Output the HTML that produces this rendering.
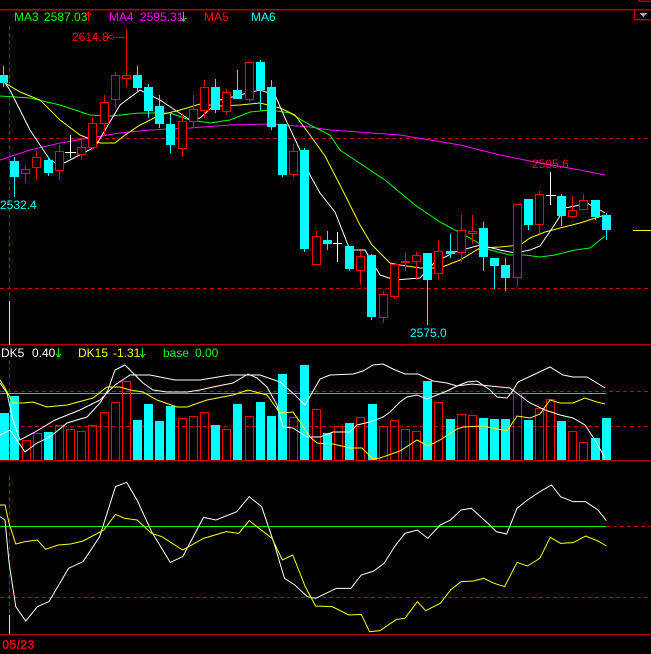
<!DOCTYPE html>
<html><head><meta charset="utf-8"><style>
html,body{margin:0;padding:0;background:#000;width:651px;height:654px;overflow:hidden}
svg{display:block}
text{font-family:"Liberation Sans",sans-serif;font-size:12px}
</style></head><body>
<svg width="651" height="654" viewBox="0 0 651 654" xmlns="http://www.w3.org/2000/svg" shape-rendering="crispEdges">
<rect width="651" height="654" fill="#000"/>
<g stroke="#b00000" stroke-width="1.5" fill="none">
<line x1="0" y1="9.5" x2="651" y2="9.5"/>
<line x1="0" y1="344.5" x2="651" y2="344.5"/>
<line x1="0" y1="460.5" x2="651" y2="460.5"/>
<line x1="0" y1="634.5" x2="651" y2="634.5"/>
<rect x="634.5" y="9.5" width="17" height="10"/>
<rect x="638.5" y="-1" width="13" height="2"/>
</g>
<polygon points="639,13 647,13 643,17" fill="#aaa"/>
<g stroke="#c00000" stroke-dasharray="4,3" stroke-width="1">
<line x1="9.5" y1="26" x2="9.5" y2="300"/>
<line x1="9.5" y1="360" x2="9.5" y2="460"/>
<line x1="9.5" y1="476" x2="9.5" y2="615"/>
<line x1="0" y1="138.5" x2="651" y2="138.5"/>
<line x1="0" y1="288.5" x2="651" y2="288.5"/>
<line x1="0" y1="391.5" x2="651" y2="391.5"/>
<line x1="0" y1="426.5" x2="651" y2="426.5"/>
<line x1="606" y1="526.5" x2="651" y2="526.5"/>
<line x1="0" y1="597.5" x2="651" y2="597.5"/>
</g>
<g stroke="#ff0" stroke-width="1">
<line x1="9.5" y1="301" x2="9.5" y2="344"/>
<line x1="9.5" y1="330" x2="9.5" y2="345"/>
<line x1="9.5" y1="615" x2="9.5" y2="634"/>
<line x1="633" y1="230.5" x2="651" y2="230.5"/>
</g>
<line x1="0" y1="393.5" x2="606" y2="393.5" stroke="#0f0"/>
<line x1="0" y1="526.5" x2="606" y2="526.5" stroke="#0f0"/>

<text x="14" y="21" fill="#0f0">MA3</text>
<text x="44" y="21" fill="#0f0">2587.03</text>
<path d="M88.5 12 V21 M86 15 L88.5 12 L91 15" stroke="#f00" fill="none"/>
<text x="109" y="21" fill="#f0f">MA4</text>
<text x="140" y="21" fill="#f0f">2595.31</text>
<path d="M183.5 12 V21 M181 18 L183.5 21 L186 18" stroke="#0f0" fill="none"/>
<text x="204" y="21" fill="#f00">MA5</text>
<text x="251" y="21" fill="#0ff">MA6</text>
<text x="1" y="357" fill="#fff">DK5</text>
<text x="32" y="357" fill="#fff">0.40</text>
<path d="M58.5 348 V357 M56 354 L58.5 357 L61 354" stroke="#0f0" fill="none"/>
<text x="78" y="357" fill="#ff0">DK15</text>
<text x="113" y="357" fill="#ff0">-1.31</text>
<path d="M142.5 348 V357 M140 354 L142.5 357 L145 354" stroke="#0f0" fill="none"/>
<text x="163" y="357" fill="#0f0">base</text>
<text x="195" y="357" fill="#0f0">0.00</text>
<text x="72" y="41" fill="#f00">2614.8</text>
<text x="107" y="41" fill="#f00">&lt;</text>
<line x1="113" y1="37.5" x2="125" y2="37.5" stroke="#f00" stroke-dasharray="2,1"/>
<text x="0" y="209" fill="#0ff">2532.4</text>
<text x="410" y="337" fill="#0ff">2575.0</text>
<text x="532" y="168" fill="#f00">2595.6</text>
<text x="2" y="649" fill="#e00000" font-weight="bold" style="font-size:13px">05/23</text>

<g fill="none" stroke-width="1" shape-rendering="auto">
<polyline stroke="#f0f" points="0,160 30,150 60,143 90,138 120,133 150,130 190,128 230,125 270,124 310,127 330,130 400,135 460,145 500,155 540,163 580,170 605,175"/>
<polyline stroke="#0f0" points="0,96 30,98 60,105 90,115 110,116 140,113 170,113 190,120 210,123 230,120 250,112 270,110 290,113 310,125 330,135 340,150 355,160 385,180 415,205 440,222 470,238 490,250 510,255 525,255 540,257 555,255 575,250 590,248 605,236"/>
<polyline stroke="#ff0" points="0,80 20,92 40,100 60,120 80,135 100,143 115,143 125,135 140,125 160,115 180,110 200,104 220,106 240,105 260,103 280,108 295,115 310,135 325,156 340,185 360,225 372,245 390,263 400,265 420,268 440,268 460,260 480,248 500,247 520,245 530,238 545,232 560,228 580,223 605,215"/>
<polyline stroke="#fff" points="0,76 10,90 30,130 50,160 60,165 70,160 95,147 120,105 140,90 160,100 175,110 190,120 200,118 220,100 240,95 260,90 275,95 285,118 300,150 310,175 320,193 335,212 350,250 365,250 380,275 395,280 420,278 435,262 455,252 480,245 500,250 515,253 530,250 540,246 555,224 565,208 580,205 585,202 600,210 605,213"/>
</g>

<g stroke-width="1">
<g stroke="#0ff">
<line x1="3.5" y1="66" x2="3.5" y2="87"/><line x1="14.5" y1="157" x2="14.5" y2="197"/><line x1="48.5" y1="157" x2="48.5" y2="176"/>
<line x1="137.5" y1="66" x2="137.5" y2="92"/><line x1="148.5" y1="84" x2="148.5" y2="118"/><line x1="159.5" y1="95" x2="159.5" y2="128"/><line x1="170.5" y1="113" x2="170.5" y2="153"/>
<line x1="215.5" y1="79" x2="215.5" y2="113"/><line x1="237.5" y1="70" x2="237.5" y2="99"/><line x1="260.5" y1="60" x2="260.5" y2="110"/><line x1="271.5" y1="80" x2="271.5" y2="130"/><line x1="282.5" y1="124" x2="282.5" y2="177"/><line x1="304.5" y1="148" x2="304.5" y2="252"/>
<line x1="327.5" y1="231" x2="327.5" y2="250"/><line x1="349.5" y1="246" x2="349.5" y2="271"/><line x1="371.5" y1="254" x2="371.5" y2="320"/><line x1="427.5" y1="253" x2="427.5" y2="325"/><line x1="450.5" y1="234" x2="450.5" y2="258"/>
<line x1="483.5" y1="222" x2="483.5" y2="271"/><line x1="494.5" y1="258" x2="494.5" y2="289"/><line x1="505.5" y1="258" x2="505.5" y2="291"/><line x1="528.5" y1="199" x2="528.5" y2="230"/><line x1="561.5" y1="194" x2="561.5" y2="226"/><line x1="595.5" y1="200" x2="595.5" y2="220"/><line x1="606.5" y1="213" x2="606.5" y2="240"/>
</g>
<g stroke="#f00">
<line x1="25.5" y1="166" x2="25.5" y2="183"/><line x1="36.5" y1="151" x2="36.5" y2="180"/><line x1="59.5" y1="145" x2="59.5" y2="180"/><line x1="81.5" y1="138" x2="81.5" y2="159"/><line x1="92.5" y1="118" x2="92.5" y2="150"/>
<line x1="104.5" y1="95" x2="104.5" y2="136"/><line x1="115.5" y1="72" x2="115.5" y2="108"/><line x1="126.5" y1="30" x2="126.5" y2="87"/><line x1="182.5" y1="113" x2="182.5" y2="157"/><line x1="193.5" y1="95" x2="193.5" y2="128"/><line x1="204.5" y1="80" x2="204.5" y2="118"/>
<line x1="226.5" y1="89" x2="226.5" y2="115"/><line x1="249.5" y1="62" x2="249.5" y2="102"/><line x1="293.5" y1="144" x2="293.5" y2="177"/><line x1="316.5" y1="231" x2="316.5" y2="264"/><line x1="360.5" y1="251" x2="360.5" y2="285"/>
<line x1="383.5" y1="291" x2="383.5" y2="323"/><line x1="394.5" y1="264" x2="394.5" y2="299"/><line x1="405.5" y1="252" x2="405.5" y2="271"/><line x1="416.5" y1="252" x2="416.5" y2="280"/><line x1="438.5" y1="240" x2="438.5" y2="280"/>
<line x1="461.5" y1="215" x2="461.5" y2="262"/><line x1="472.5" y1="215" x2="472.5" y2="244"/><line x1="517.5" y1="204" x2="517.5" y2="286"/><line x1="539.5" y1="191" x2="539.5" y2="233"/><line x1="572.5" y1="196" x2="572.5" y2="218"/><line x1="583.5" y1="194" x2="583.5" y2="209"/>
</g>
<g stroke="#fff">
<line x1="70.5" y1="135" x2="70.5" y2="158"/><line x1="65" y1="152.5" x2="76" y2="152.5"/>
<line x1="337.5" y1="232" x2="337.5" y2="262"/><line x1="333" y1="243.5" x2="342" y2="243.5"/>
<line x1="550.5" y1="172" x2="550.5" y2="205"/><line x1="546" y1="195.5" x2="556" y2="195.5"/>
</g>
</g>
<g fill="#0ff">
<rect x="0" y="75" width="8" height="8"/><rect x="10" y="161" width="9" height="16"/><rect x="44" y="160" width="9" height="13"/>
<rect x="133" y="75" width="9" height="13"/><rect x="144" y="87" width="9" height="24"/><rect x="155" y="106" width="9" height="18"/><rect x="166" y="124" width="9" height="21"/>
<rect x="211" y="87" width="9" height="23"/><rect x="233" y="90" width="9" height="9"/><rect x="256" y="62" width="9" height="28"/><rect x="267" y="87" width="9" height="40"/><rect x="278" y="124" width="9" height="51"/><rect x="300" y="150" width="9" height="99"/>
<rect x="323" y="240" width="9" height="4"/><rect x="345" y="246" width="9" height="23"/><rect x="367" y="255" width="9" height="62"/><rect x="423" y="253" width="9" height="27"/><rect x="446" y="251" width="9" height="3"/>
<rect x="479" y="228" width="9" height="29"/><rect x="490" y="258" width="9" height="8"/><rect x="501" y="265" width="9" height="13"/><rect x="524" y="199" width="9" height="26"/><rect x="557" y="196" width="9" height="20"/><rect x="591" y="200" width="9" height="17"/><rect x="602" y="215" width="9" height="15"/>
</g>
<g fill="#000" stroke="#f00" stroke-width="1.2">
<rect x="21.5" y="169.5" width="8" height="4"/><rect x="32.5" y="157.5" width="8" height="10"/><rect x="55.5" y="151.5" width="8" height="19"/><rect x="77.5" y="147.5" width="8" height="7"/><rect x="88.5" y="123.5" width="8" height="24"/>
<rect x="100.5" y="102.5" width="8" height="21"/><rect x="111.5" y="75.5" width="8" height="24"/><rect x="122.5" y="75.5" width="8" height="3"/><rect x="178.5" y="121.5" width="8" height="27"/><rect x="189.5" y="109.5" width="8" height="12"/><rect x="200.5" y="87.5" width="8" height="23"/>
<rect x="222.5" y="92.5" width="8" height="19"/><rect x="245.5" y="62.5" width="8" height="37"/><rect x="289.5" y="151.5" width="8" height="23"/><rect x="312.5" y="236.5" width="8" height="28"/><rect x="356.5" y="256.5" width="8" height="14"/>
<rect x="379.5" y="294.5" width="8" height="23"/><rect x="390.5" y="264.5" width="8" height="32"/><rect x="401.5" y="261.5" width="8" height="1"/><rect x="412.5" y="255.5" width="8" height="6"/><rect x="434.5" y="251.5" width="8" height="22"/>
<rect x="457.5" y="230.5" width="8" height="22"/><rect x="468.5" y="231.5" width="8" height="2"/><rect x="513.5" y="204.5" width="8" height="73"/><rect x="535.5" y="194.5" width="8" height="30"/><rect x="568.5" y="210.5" width="8" height="6"/><rect x="579.5" y="200.5" width="8" height="9"/>
</g>

<g fill="#0ff">
<rect x="0" y="413" width="9" height="47"/><rect x="10" y="396" width="9" height="64"/><rect x="44" y="432" width="9" height="28"/>
<rect x="133" y="420" width="9" height="40"/><rect x="144" y="404" width="9" height="56"/><rect x="155" y="421" width="9" height="39"/><rect x="166" y="406" width="9" height="54"/>
<rect x="211" y="425" width="9" height="35"/><rect x="233" y="404" width="9" height="56"/><rect x="256" y="402" width="9" height="58"/><rect x="267" y="416" width="9" height="44"/><rect x="278" y="374" width="9" height="86"/><rect x="300" y="365" width="9" height="95"/>
<rect x="323" y="433" width="9" height="27"/><rect x="345" y="423" width="9" height="37"/><rect x="368" y="404" width="9" height="56"/><rect x="423" y="381" width="9" height="79"/><rect x="446" y="419" width="9" height="41"/>
<rect x="479" y="418" width="9" height="42"/><rect x="490" y="419" width="9" height="41"/><rect x="501" y="419" width="9" height="41"/><rect x="524" y="420" width="9" height="40"/><rect x="557" y="421" width="9" height="39"/><rect x="591" y="438" width="9" height="22"/><rect x="602" y="418" width="9" height="42"/>
</g>
<g fill="none" stroke="#f00" stroke-width="1.2">
<rect x="22.5" y="440.5" width="8" height="20"/><rect x="33.5" y="433.5" width="8" height="27"/><rect x="55.5" y="425.5" width="8" height="35"/><rect x="66.5" y="429.5" width="8" height="31"/><rect x="77.5" y="431.5" width="8" height="29"/><rect x="88.5" y="425.5" width="8" height="35"/>
<rect x="100.5" y="412.5" width="8" height="48"/><rect x="111.5" y="402.5" width="8" height="58"/><rect x="122.5" y="381.5" width="8" height="79"/><rect x="178.5" y="418.5" width="8" height="42"/><rect x="189.5" y="416.5" width="8" height="44"/><rect x="200.5" y="412.5" width="8" height="48"/>
<rect x="222.5" y="429.5" width="8" height="31"/><rect x="245.5" y="416.5" width="8" height="44"/><rect x="289.5" y="417.5" width="8" height="43"/><rect x="312.5" y="409.5" width="8" height="51"/><rect x="334.5" y="426.5" width="8" height="34"/><rect x="356.5" y="417.5" width="8" height="43"/>
<rect x="379.5" y="426.5" width="8" height="34"/><rect x="390.5" y="420.5" width="8" height="40"/><rect x="401.5" y="429.5" width="8" height="31"/><rect x="412.5" y="431.5" width="8" height="29"/><rect x="434.5" y="402.5" width="8" height="58"/>
<rect x="457.5" y="414.5" width="8" height="46"/><rect x="468.5" y="415.5" width="8" height="45"/><rect x="513.5" y="393.5" width="8" height="67"/><rect x="535.5" y="408.5" width="8" height="52"/><rect x="546.5" y="399.5" width="8" height="61"/><rect x="568.5" y="431.5" width="8" height="29"/><rect x="579.5" y="442.5" width="8" height="18"/>
</g>
<g fill="none" stroke-width="1" shape-rendering="auto">
<polyline stroke="#fff" points="0,435 10,430 25,452 37,443 50,437 67,423 87,417 100,403 108,390 115,370 125,365 133,373 143,383 153,390 167,392 187,392 200,390 213,387 233,383 248,374 257,378 267,387 277,405 283,427 293,428 307,437 320,437 333,432 350,432 357,425 370,422 383,417 390,412 400,402 407,397 417,395 427,399 437,395 447,391 457,386 467,382 477,381 490,390 497,397 507,398 512,392 518,382 533,375 550,367 563,375 573,377 587,377 597,383 605,388"/>
<polyline stroke="#fff" points="0,383 7,393 13,420 20,440 35,432 55,420 80,410 100,400 115,385 130,375 150,375 175,380 200,380 230,375 260,375 280,382 295,395 305,405 320,379 330,375 353,374 363,371 373,365 383,364 393,369 405,374 418,374 433,381 447,383 457,386 472,384 490,386 510,388 530,403 545,410 560,415 573,418 585,425 595,440 605,458"/>
<polyline stroke="#ff0" points="0,380 5,388 13,403 23,403 33,402 47,407 67,405 93,398 107,387 120,387 130,390 143,392 157,400 177,407 187,407 207,400 233,395 248,390 267,395 280,413 293,412 300,422 310,437 317,443 333,444 350,448 362,448 373,459 380,458 400,451 417,440 428,446 440,440 457,429 463,427 483,426 493,428 507,431 517,416 530,418 540,414 550,400 560,403 573,403 585,398 597,402 605,404"/>
</g>
<g transform="translate(0,460) scale(0.41528,0.33333)" fill="none" shape-rendering="auto">
<polyline stroke="#fff" vector-effect="non-scaling-stroke" stroke-width="1" points="0,170 12,180 22,310 38,440 62,483 90,440 118,425 165,325 200,305 240,230 278,80 305,67 330,120 365,215 410,307 440,290 490,172 520,180 570,155 600,110 630,140 660,250 685,355 710,375 740,410 760,415 810,385 845,385 870,345 900,333 925,310 950,260 975,220 1005,210 1030,235 1060,195 1085,180 1110,150 1135,145 1175,190 1195,215 1220,222 1245,145 1270,120 1300,95 1328,75 1350,110 1380,125 1410,125 1440,150 1460,182"/>
<polyline stroke="#ff0" vector-effect="non-scaling-stroke" stroke-width="1" points="0,135 12,135 22,190 38,252 60,245 90,240 110,268 140,255 170,252 200,243 250,210 278,163 300,175 330,180 365,220 390,230 440,270 490,235 545,215 575,220 600,182 655,235 680,300 705,285 735,380 760,438 800,440 840,465 870,463 890,515 915,512 955,478 975,475 1005,425 1025,452 1060,430 1085,390 1110,365 1140,363 1165,355 1190,370 1215,380 1245,307 1270,318 1300,295 1325,232 1350,250 1380,248 1410,228 1440,243 1460,258"/>
</g>
</svg>
</body></html>
